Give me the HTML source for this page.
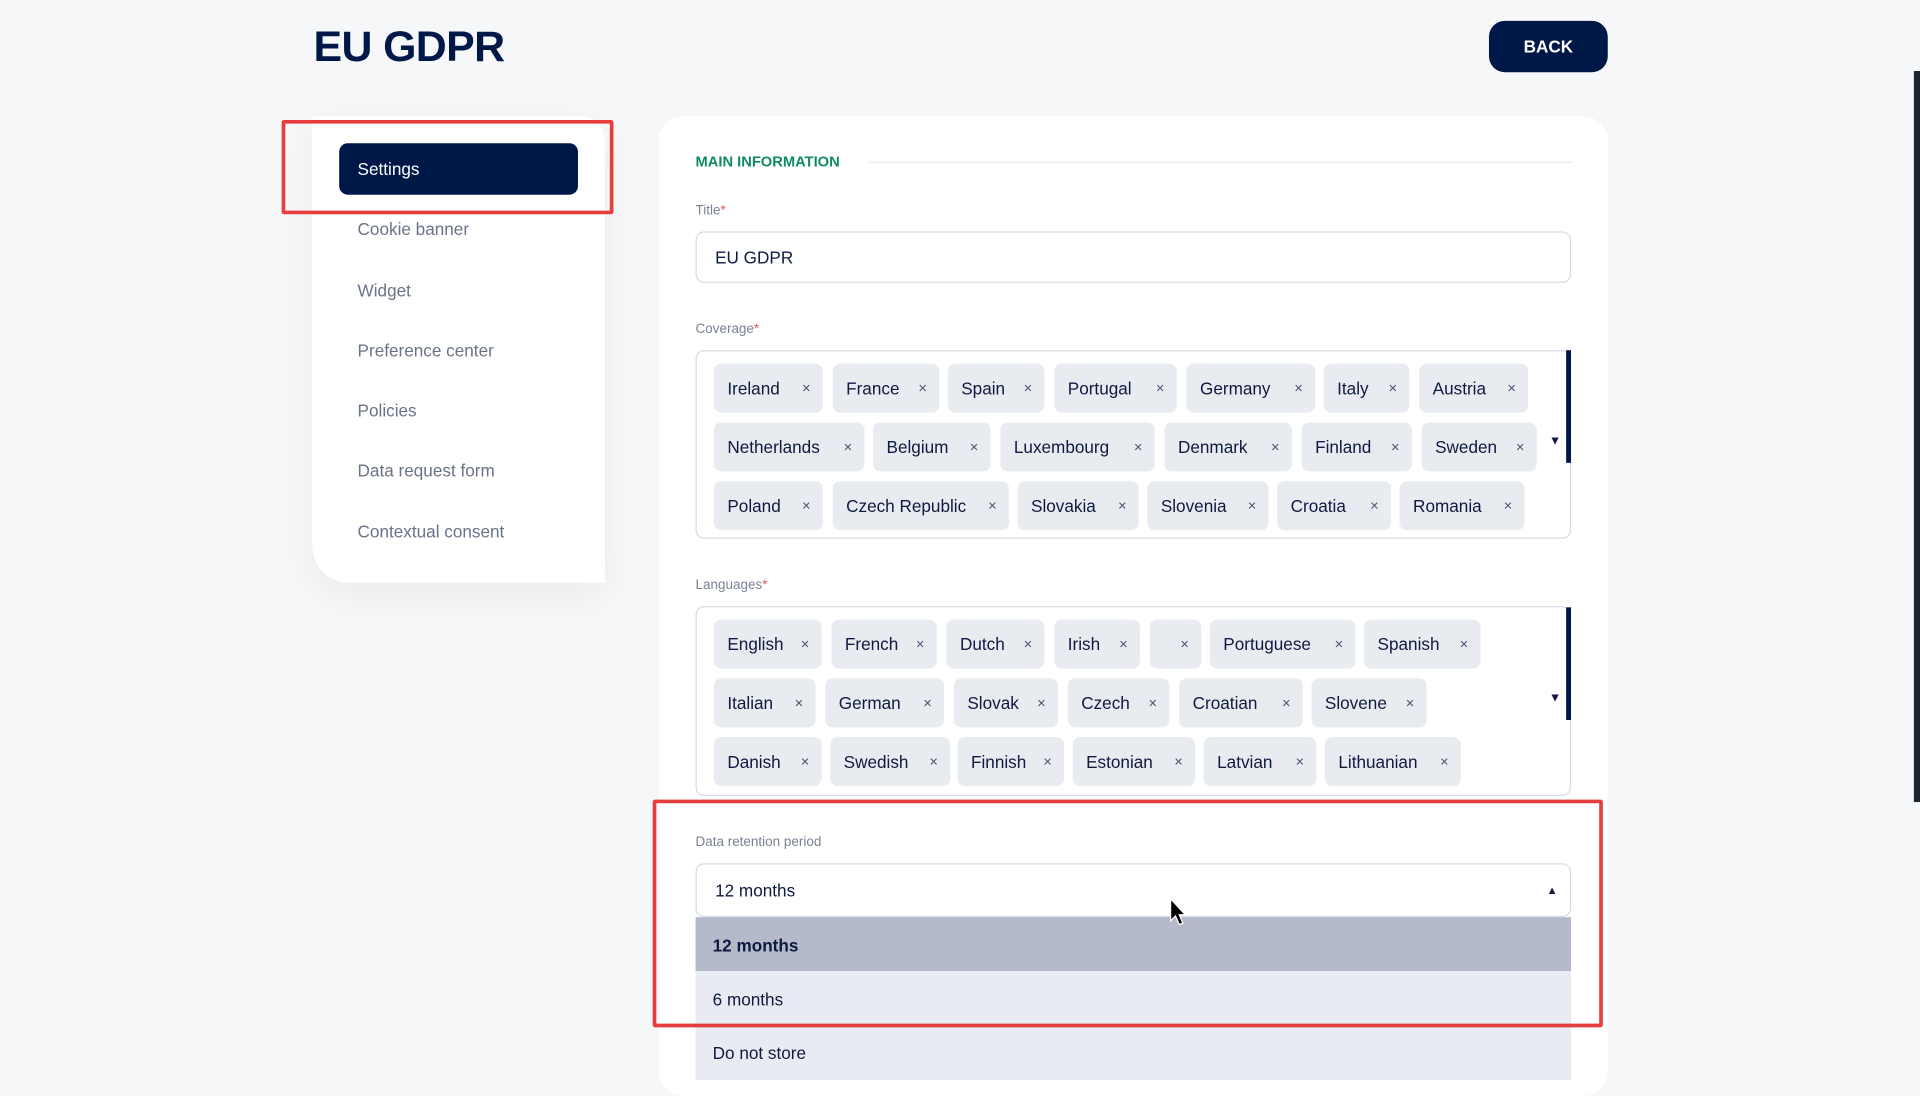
<!DOCTYPE html>
<html><head><meta charset="utf-8"><style>
html,body{margin:0;padding:0;width:1920px;height:1080px;overflow:hidden;background:#f6f7f9;}
#s{position:absolute;left:0;top:0;width:1568px;height:882px;transform:scale(1.22449);transform-origin:0 0;font-family:"Liberation Sans",sans-serif;color:#0e1a40;background:#f6f7f9;}
.a{position:absolute;}
.t{position:absolute;height:40px;background:#e8ebf0;border-radius:6px;font-size:14px;line-height:40px;padding-left:11px;box-sizing:border-box;color:#0e1a40;}
.t i{position:absolute;right:10px;top:0;font-style:normal;font-size:12px;color:#4a5470;}
.nav{position:absolute;left:292px;font-size:14px;color:#6b7387;}
.box{position:absolute;left:568px;width:715px;border:1px solid #d6dbe5;border-radius:7px;background:#fff;box-sizing:border-box;}
.lbl{position:absolute;left:568px;font-size:11px;color:#7a8296;}
.lbl b{color:#e05a5a;font-weight:normal;}
</style></head><body><div id="s">
<div class="a" style="left:256px;top:19px;font-size:35px;font-weight:bold;color:#001848;letter-spacing:-0.5px">EU GDPR</div>
<div class="a" style="left:1216px;top:17px;width:97px;height:42px;background:#001848;border-radius:13px;color:#fff;font-size:14px;font-weight:bold;text-align:center;line-height:42px">BACK</div>
<div class="a" style="left:1563px;top:58px;width:5px;height:597px;background:#1d2333"></div>

<div class="a" style="left:255px;top:95px;width:239px;height:381px;background:#fff;border-radius:0 20px 0 30px;box-shadow:0 10px 30px rgba(0,0,0,0.05)"></div>
<div class="a" style="left:277px;top:117px;width:195px;height:42px;background:#001848;border-radius:7px;color:#fff;font-size:14px;line-height:42px;box-sizing:border-box;padding-left:15px">Settings</div>
<div class="a" style="left:230px;top:98px;width:271px;height:77px;border:3px solid #e53e3e;box-sizing:border-box;border-radius:2px"></div>
<div class="nav" style="top:179px">Cookie banner</div>
<div class="nav" style="top:229px">Widget</div>
<div class="nav" style="top:278px">Preference center</div>
<div class="nav" style="top:327px">Policies</div>
<div class="nav" style="top:376px">Data request form</div>
<div class="nav" style="top:426px">Contextual consent</div>

<div class="a" style="left:538px;top:95px;width:775px;height:800px;background:#fff;border-radius:20px"></div>
<div class="a" style="left:568px;top:125px;font-size:12px;font-weight:bold;color:#0e8a66">MAIN INFORMATION</div>
<div class="a" style="left:710px;top:132px;width:573px;height:1px;background:#e6e9ef"></div>

<div class="lbl" style="top:166px">Title<b>*</b></div>
<div class="box" style="top:189px;height:42px;font-size:14px;line-height:40px;padding-left:15px">EU GDPR</div>

<div class="lbl" style="top:263px">Coverage<b>*</b></div>
<div class="box" style="top:286px;height:154px"></div>
<div class="a" style="left:1279px;top:286px;width:4px;height:92px;background:#001848"></div>
<div class="a" style="left:1265px;top:355px;font-size:10px">▼</div>
<div class="t" style="left:583px;top:297px;width:89px">Ireland<i>×</i></div>
<div class="t" style="left:680px;top:297px;width:87px">France<i>×</i></div>
<div class="t" style="left:774px;top:297px;width:79px">Spain<i>×</i></div>
<div class="t" style="left:861px;top:297px;width:100px">Portugal<i>×</i></div>
<div class="t" style="left:969px;top:297px;width:105px">Germany<i>×</i></div>
<div class="t" style="left:1081px;top:297px;width:70px">Italy<i>×</i></div>
<div class="t" style="left:1159px;top:297px;width:89px">Austria<i>×</i></div>
<div class="t" style="left:583px;top:345px;width:123px">Netherlands<i>×</i></div>
<div class="t" style="left:713px;top:345px;width:96px">Belgium<i>×</i></div>
<div class="t" style="left:817px;top:345px;width:126px">Luxembourg<i>×</i></div>
<div class="t" style="left:951px;top:345px;width:104px">Denmark<i>×</i></div>
<div class="t" style="left:1063px;top:345px;width:90px">Finland<i>×</i></div>
<div class="t" style="left:1161px;top:345px;width:94px">Sweden<i>×</i></div>
<div class="t" style="left:583px;top:393px;width:89px">Poland<i>×</i></div>
<div class="t" style="left:680px;top:393px;width:144px">Czech Republic<i>×</i></div>
<div class="t" style="left:831px;top:393px;width:99px">Slovakia<i>×</i></div>
<div class="t" style="left:937px;top:393px;width:99px">Slovenia<i>×</i></div>
<div class="t" style="left:1043px;top:393px;width:93px">Croatia<i>×</i></div>
<div class="t" style="left:1143px;top:393px;width:102px">Romania<i>×</i></div>

<div class="lbl" style="top:472px">Languages<b>*</b></div>
<div class="box" style="top:495px;height:155px"></div>
<div class="a" style="left:1279px;top:496px;width:4px;height:92px;background:#001848"></div>
<div class="a" style="left:1265px;top:565px;font-size:10px">▼</div>
<div class="t" style="left:583px;top:506px;width:88px">English<i>×</i></div>
<div class="t" style="left:679px;top:506px;width:86px">French<i>×</i></div>
<div class="t" style="left:773px;top:506px;width:80px">Dutch<i>×</i></div>
<div class="t" style="left:861px;top:506px;width:70px">Irish<i>×</i></div>
<div class="t" style="left:939px;top:506px;width:42px"><i>×</i></div>
<div class="t" style="left:988px;top:506px;width:119px">Portuguese<i>×</i></div>
<div class="t" style="left:1114px;top:506px;width:95px">Spanish<i>×</i></div>
<div class="t" style="left:583px;top:554px;width:83px">Italian<i>×</i></div>
<div class="t" style="left:674px;top:554px;width:97px">German<i>×</i></div>
<div class="t" style="left:779px;top:554px;width:85px">Slovak<i>×</i></div>
<div class="t" style="left:872px;top:554px;width:83px">Czech<i>×</i></div>
<div class="t" style="left:963px;top:554px;width:101px">Croatian<i>×</i></div>
<div class="t" style="left:1071px;top:554px;width:94px">Slovene<i>×</i></div>
<div class="t" style="left:583px;top:602px;width:88px">Danish<i>×</i></div>
<div class="t" style="left:678px;top:602px;width:98px">Swedish<i>×</i></div>
<div class="t" style="left:782px;top:602px;width:87px">Finnish<i>×</i></div>
<div class="t" style="left:876px;top:602px;width:100px">Estonian<i>×</i></div>
<div class="t" style="left:983px;top:602px;width:92px">Latvian<i>×</i></div>
<div class="t" style="left:1082px;top:602px;width:111px">Lithuanian<i>×</i></div>

<div class="lbl" style="top:682px">Data retention period</div>
<div class="box" style="top:705px;height:44px;font-size:14px;line-height:42px;padding-left:15px">12 months<span style="position:absolute;right:10px;font-size:9px">▲</span></div>
<div class="a" style="left:568px;top:749px;width:715px;height:44px;background:#b4bac9;font-size:14px;font-weight:bold;line-height:46px;padding-left:14px;box-sizing:border-box">12 months</div>
<div class="a" style="left:568px;top:793px;width:715px;height:89px;background:#e8ebf1;font-size:14px;box-sizing:border-box;padding-left:14px"><div style="line-height:46px">6 months</div><div style="line-height:42px">Do not store</div></div>
<div class="a" style="left:533px;top:653px;width:776px;height:186px;border:3px solid #e53e3e;box-sizing:border-box;border-radius:2px"></div>
<svg class="a" style="left:955px;top:733px" width="16" height="26" viewBox="0 0 16 26"><path d="M1 1 L1 19 L5 15 L8 22 L11 21 L8 14 L13 14 Z" fill="#000" stroke="#fff" stroke-width="1"/></svg>
</div></body></html>
